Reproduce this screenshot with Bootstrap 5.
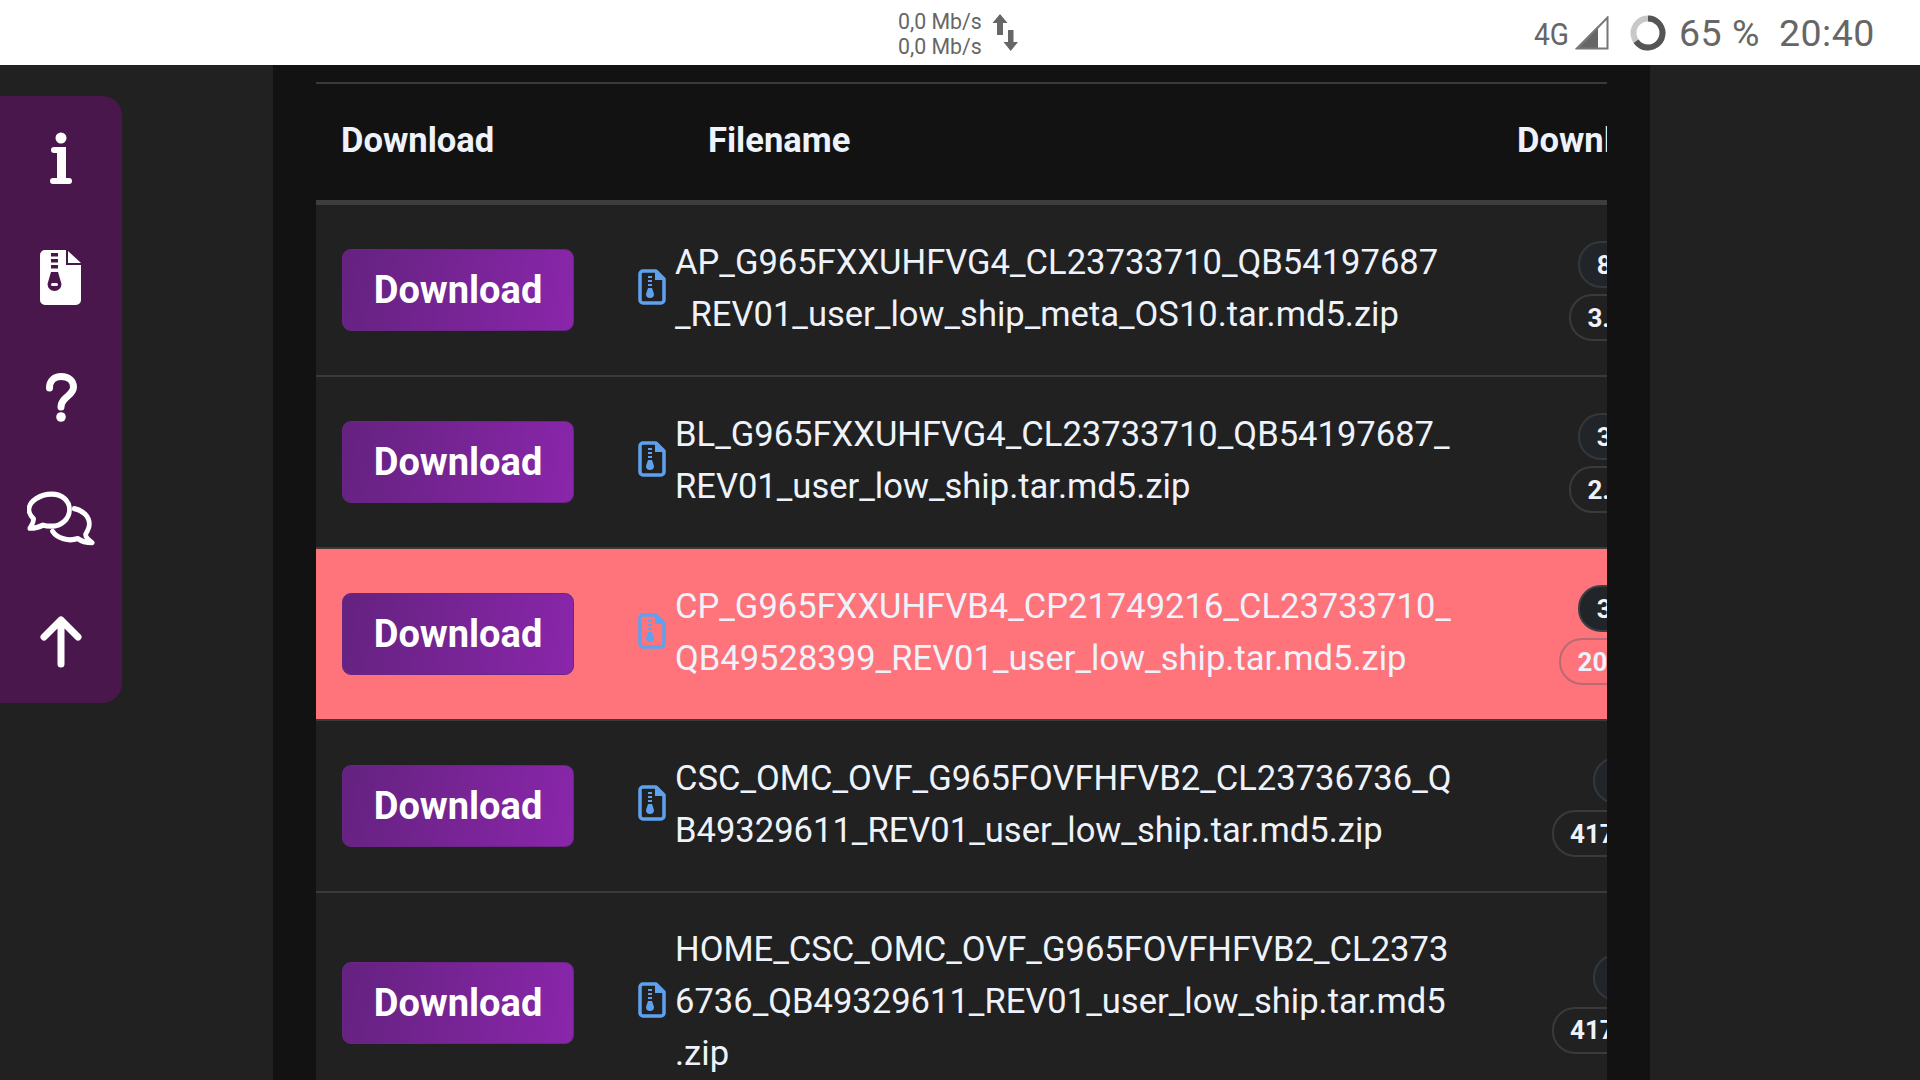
<!DOCTYPE html>
<html lang="en">
<head>
<meta charset="utf-8">
<title>Firmware downloads</title>
<link href="https://cdn.jsdelivr.net/npm/bootstrap@5.3.0/dist/css/bootstrap.min.css" rel="stylesheet">
<style>
html,body{height:1080px;overflow:hidden}
body{background:#212121;font-family:Roboto,"Liberation Sans",sans-serif;color:#eef2fa}
.status-strip{height:65px;background:#fff;color:#666}
.speed-text{font-size:21.3px;line-height:25px;width:84px;margin-left:898px;margin-top:2px;white-space:nowrap}
.speed-arrows{margin-left:10px;margin-top:1px}
.net-label{font-size:32px;transform:scaleX(.88);transform-origin:left;width:33px;margin-left:514px;line-height:1;white-space:nowrap;margin-top:2px}
.signal-icon{margin-left:8px}
.ring-icon{margin-left:21px}
.batt-text{font-size:37.5px;line-height:1;margin-left:13px;letter-spacing:.5px;margin-top:2px}
.clock-text{font-size:37.5px;line-height:1;margin-left:19px;letter-spacing:.5px;margin-top:2px}
.side-rail{position:absolute;left:0;top:96px;width:122px;height:607px;background:#4a174d;border-radius:0 20px 20px 0}
.rail-item{height:121.4px;display:flex;align-items:center;justify-content:center}
.page-shell{width:1377px;margin-left:273px;height:1015px;background:#121212;padding:17px 43px 0 43px}
.table-clip{overflow:hidden;width:1291px;height:998px}
.file-table{width:1460px;table-layout:fixed;margin:0;--bs-table-bg:transparent;--bs-table-color:#eef2fa;border-collapse:separate;border-spacing:0}
.file-table th{height:123px;font-size:34.56px;line-height:1;font-weight:700;padding:0 0 4px 25px;vertical-align:middle;background:#121212;color:#eef2fa;border-top:2px solid #3a3a3a;border-bottom:5px solid #3d3d3d;white-space:nowrap}
.file-table th.name-head{padding-left:96px}
.file-table th.count-head{padding-left:24px}
.file-table td{background:#212121;color:#eef2fa;height:172px;padding:32px 0 32px 26px;vertical-align:middle;border-bottom:2px solid #3a3a3a;overflow:visible}
.file-table tr.row-current td{background:#ff737a}
.file-table tr.row-tall td{padding-top:31px;padding-bottom:31px}
.dl-btn{width:232px;height:82px;padding:0;font-size:38px;font-weight:700;line-height:1;color:#fff;border:1px solid #6b2586;border-radius:9px;background:linear-gradient(100deg,#64227f,#8a26ab)}
.dl-btn:hover{color:#fff}
.name-cell{display:flex;align-items:center;gap:9px}
.name-cell svg{margin-bottom:6px;flex:none}
.name-text{font-size:34.56px;line-height:51.84px;font-weight:400;white-space:nowrap;margin-bottom:2px}
.count-cell{display:flex;flex-direction:column;align-items:center;gap:6px;width:282px;margin-left:-26px;margin-top:2px}
.pill-a,.pill-b{font-size:26px;line-height:1;font-weight:700;height:47px;display:flex;align-items:center;padding:0 16.5px;border-radius:23px;white-space:nowrap}
.pill-a{background:#212529;border:2px solid #33383d}
.pill-b{border:2px solid #3a3a3a}
.row-current .pill-b{border-color:#b96a72}
.row-current .pill-a{border-color:#3a3f44}
</style>
</head>
<body>
<header class="status-strip d-flex align-items-center">
  <div class="speed-text">0,0 Mb/s<br>0,0 Mb/s</div>
  <svg class="speed-arrows" width="28" height="38" viewBox="0 0 28 38" aria-hidden="true"><path fill="#666" d="M8 0 15.500 9H11V21H5V9H.5zM16 16H21.500V28H26L18.700 37 11.500 28H16z"/></svg>
  <div class="net-label">4G</div>
  <svg class="signal-icon" width="34" height="34" viewBox="0 0 34 34" aria-hidden="true"><path fill="#666" d="M0 33 23 10V33z"/><path fill="none" stroke="#777" stroke-width="2" d="M2.500 32.500 32.500 1.500V32.500z"/></svg>
  <svg class="ring-icon" width="36" height="36" viewBox="0 0 36 36" aria-hidden="true"><circle cx="18" cy="18" r="14.500" fill="none" stroke="#c8c8c8" stroke-width="6"/><circle cx="18" cy="18" r="14.500" fill="none" stroke="#555" stroke-width="6" stroke-dasharray="59.200 91.100" transform="rotate(-90 18 18)"/></svg>
  <div class="batt-text text-nowrap">65 %</div>
  <div class="clock-text">20:40</div>
</header>

<nav class="side-rail d-flex flex-column">
  <div class="rail-item">
    <svg width="60" height="60" viewBox="0 0 60 60" aria-hidden="true"><circle cx="30" cy="11" r="5.500" fill="#fff"/><path d="M23 23H31M22 54H38" fill="none" stroke="#fff" stroke-width="6" stroke-linecap="round"/><path d="M26 20H35V54H26z" fill="#fff"/></svg>
  </div>
  <div class="rail-item">
    <svg width="42" height="56" viewBox="0 0 42 56" aria-hidden="true"><path fill="#fff" d="M5 0H26V15H41V50a5 5 0 0 1-5 5H5a5 5 0 0 1-5-5V5a5 5 0 0 1 5-5z"/><path fill="#fff" d="M28 1 41 13H28z"/><path fill="#4a174d" d="M11 3h7v3.500h-7zM11 9h7v3.500h-7zM11 15h7v3.500h-7zM11 22h7l3.500 12a7 7 0 1 1-14 0z"/><rect x="11" y="33" width="7" height="3" rx="1.500" fill="#fff"/></svg>
  </div>
  <div class="rail-item">
    <svg width="60" height="60" viewBox="0 0 60 60" aria-hidden="true"><path d="M18.500 19C18.500 11 24 7.500 30 7.500C38 7.500 42.500 12 42.500 18C42.500 27 30 28 30 38" fill="none" stroke="#fff" stroke-width="7" stroke-linecap="round"/><circle cx="30" cy="48" r="4.800" fill="#fff"/></svg>
  </div>
  <div class="rail-item">
    <svg width="68" height="62" viewBox="0 0 72 60" preserveAspectRatio="none" aria-hidden="true"><path d="M26 4C38 4 45 11 45 19C45 28 36 35 26 35C23 35 20 35 17 34C13 36 8 37 3 37C5 34 7 32 7 28C4 25 2 22 2 19C2 11 14 4 26 4Z" fill="none" stroke="#fff" stroke-width="5" stroke-linejoin="round"/><path d="M50 18C60 20 66 26 66 33C66 37 64 40 62 43C62 46 65 48 69 51C63 51 58 50 54 47C44 50 32 47 27 40" fill="none" stroke="#fff" stroke-width="5" stroke-linejoin="round" stroke-linecap="round"/></svg>
  </div>
  <div class="rail-item">
    <svg width="60" height="60" viewBox="0 0 60 60" aria-hidden="true"><path d="M30 52V8M13 25 30 8 47 25" fill="none" stroke="#fff" stroke-width="7" stroke-linecap="round" stroke-linejoin="round"/></svg>
  </div>
</nav>

<main class="page-shell">
  <div class="table-clip">
    <table class="table file-table">
      <colgroup><col style="width:296px"><col style="width:881px"><col style="width:283px"></colgroup>
      <thead>
        <tr><th>Download</th><th class="name-head">Filename</th><th class="count-head">Downloads</th></tr>
      </thead>
      <tbody>
        <tr>
          <td><button class="btn dl-btn">Download</button></td>
          <td><div class="name-cell"><svg width="28" height="36" viewBox="0 0 28 36" aria-hidden="true"><path d="M5 2H18L26 10V31a3 3 0 0 1-3 3H5a3 3 0 0 1-3-3V5a3 3 0 0 1 3-3z" fill="none" stroke="#5ea2ef" stroke-width="3.500" stroke-linejoin="round"/><path d="M17 2V11H26z" fill="#5ea2ef"/><path d="M10 7h4v2h-4zM10 11h4v2h-4zM10 15h4v2h-4zM10 19h4l2 6a4 4 0 1 1-8 0z" fill="#5ea2ef"/></svg><div class="name-text">AP_G965FXXUHFVG4_CL23733710_QB54197687<br>_REV01_user_low_ship_meta_OS10.tar.md5.zip</div></div></td>
          <td><div class="count-cell"><span class="pill-a">84215</span><span class="pill-b">3.52 GB</span></div></td>
        </tr>
        <tr>
          <td><button class="btn dl-btn">Download</button></td>
          <td><div class="name-cell"><svg width="28" height="36" viewBox="0 0 28 36" aria-hidden="true"><path d="M5 2H18L26 10V31a3 3 0 0 1-3 3H5a3 3 0 0 1-3-3V5a3 3 0 0 1 3-3z" fill="none" stroke="#5ea2ef" stroke-width="3.500" stroke-linejoin="round"/><path d="M17 2V11H26z" fill="#5ea2ef"/><path d="M10 7h4v2h-4zM10 11h4v2h-4zM10 15h4v2h-4zM10 19h4l2 6a4 4 0 1 1-8 0z" fill="#5ea2ef"/></svg><div class="name-text">BL_G965FXXUHFVG4_CL23733710_QB54197687_<br>REV01_user_low_ship.tar.md5.zip</div></div></td>
          <td><div class="count-cell"><span class="pill-a">34215</span><span class="pill-b">2.57 GB</span></div></td>
        </tr>
        <tr class="row-current">
          <td><button class="btn dl-btn">Download</button></td>
          <td><div class="name-cell"><svg width="28" height="36" viewBox="0 0 28 36" aria-hidden="true"><path d="M5 2H18L26 10V31a3 3 0 0 1-3 3H5a3 3 0 0 1-3-3V5a3 3 0 0 1 3-3z" fill="none" stroke="#5ea2ef" stroke-width="3.500" stroke-linejoin="round"/><path d="M17 2V11H26z" fill="#5ea2ef"/><path d="M10 7h4v2h-4zM10 11h4v2h-4zM10 15h4v2h-4zM10 19h4l2 6a4 4 0 1 1-8 0z" fill="#5ea2ef"/></svg><div class="name-text">CP_G965FXXUHFVB4_CP21749216_CL23733710_<br>QB49528399_REV01_user_low_ship.tar.md5.zip</div></div></td>
          <td><div class="count-cell"><span class="pill-a">34215</span><span class="pill-b">20.43 MB</span></div></td>
        </tr>
        <tr>
          <td><button class="btn dl-btn">Download</button></td>
          <td><div class="name-cell"><svg width="28" height="36" viewBox="0 0 28 36" aria-hidden="true"><path d="M5 2H18L26 10V31a3 3 0 0 1-3 3H5a3 3 0 0 1-3-3V5a3 3 0 0 1 3-3z" fill="none" stroke="#5ea2ef" stroke-width="3.500" stroke-linejoin="round"/><path d="M17 2V11H26z" fill="#5ea2ef"/><path d="M10 7h4v2h-4zM10 11h4v2h-4zM10 15h4v2h-4zM10 19h4l2 6a4 4 0 1 1-8 0z" fill="#5ea2ef"/></svg><div class="name-text">CSC_OMC_OVF_G965FOVFHFVB2_CL23736736_Q<br>B49329611_REV01_user_low_ship.tar.md5.zip</div></div></td>
          <td><div class="count-cell"><span class="pill-a">158</span><span class="pill-b">417.31 MB</span></div></td>
        </tr>
        <tr class="row-tall">
          <td><button class="btn dl-btn">Download</button></td>
          <td><div class="name-cell"><svg width="28" height="36" viewBox="0 0 28 36" aria-hidden="true"><path d="M5 2H18L26 10V31a3 3 0 0 1-3 3H5a3 3 0 0 1-3-3V5a3 3 0 0 1 3-3z" fill="none" stroke="#5ea2ef" stroke-width="3.500" stroke-linejoin="round"/><path d="M17 2V11H26z" fill="#5ea2ef"/><path d="M10 7h4v2h-4zM10 11h4v2h-4zM10 15h4v2h-4zM10 19h4l2 6a4 4 0 1 1-8 0z" fill="#5ea2ef"/></svg><div class="name-text">HOME_CSC_OMC_OVF_G965FOVFHFVB2_CL2373<br>6736_QB49329611_REV01_user_low_ship.tar.md5<br>.zip</div></div></td>
          <td><div class="count-cell"><span class="pill-a">158</span><span class="pill-b">417.34 MB</span></div></td>
        </tr>
      </tbody>
    </table>
  </div>
</main>
<script src="https://cdn.jsdelivr.net/npm/bootstrap@5.3.0/dist/js/bootstrap.bundle.min.js"></script>
</body>
</html>
